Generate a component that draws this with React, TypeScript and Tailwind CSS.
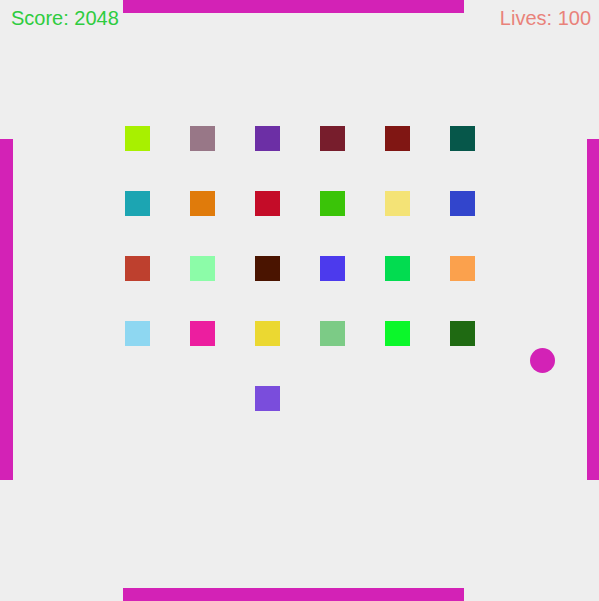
import React from "react";

const bricks: (string | null)[] = [
  "#a8f000", "#987787", "#6c2fa5", "#771d2c", "#801613", "#06574a",
  "#1ca5b2", "#e07b0b", "#c40c28", "#3ac408", "#f4e376", "#3245cc",
  "#be402e", "#8cfca8", "#4a1400", "#4c3aed", "#02dc50", "#fba14d",
  "#8ed7f1", "#ec1e9f", "#ebd831", "#7ccb86", "#0bf72a", "#1f6a12",
  null, null, "#7a4ddc", null, null, null,
];

export default function App() {
  return (
    <div
      className="relative flex w-[599px] h-[601px] overflow-hidden bg-[#eeeeee]"
      style={{ fontFamily: '"Liberation Sans", Arial, sans-serif' }}
    >
      {/* left column: score + left wall */}
      <div className="flex flex-col w-[123px] pt-[8px]">
        <div className="pl-[11px] text-[20px] leading-[20px] whitespace-nowrap text-[#2ecc40]">
          Score: 2048
        </div>
        <div className="mt-[111px] w-[12.5px] h-[341px] bg-[#d322b6]" />
      </div>

      {/* centre column: paddles + bricks */}
      <div className="flex flex-col w-[341px]">
        <div className="h-[13px] bg-[#d322b6]" />
        <div className="ml-[2px] mt-[113px] grid grid-cols-[repeat(6,25px)] auto-rows-[25px] gap-[40px]">
          {bricks.map((c, i) => (
            <div key={i} className="w-[25px] h-[25px]" style={c ? { backgroundColor: c } : undefined} />
          ))}
        </div>
        <div className="mt-auto h-[13px] bg-[#d322b6]" />
      </div>

      {/* right column: lives + right wall */}
      <div className="flex flex-1 flex-col items-end pt-[8px]">
        <div className="pr-[8px] text-[20px] leading-[20px] whitespace-nowrap text-[#e9827a]">
          Lives: 100
        </div>
        <div className="mt-[111px] w-[12px] h-[341px] bg-[#d322b6]" />
      </div>

      <div className="absolute left-[530px] top-[348px] w-[25px] h-[25px] rounded-full bg-[#d322b6]" />
    </div>
  );
}
